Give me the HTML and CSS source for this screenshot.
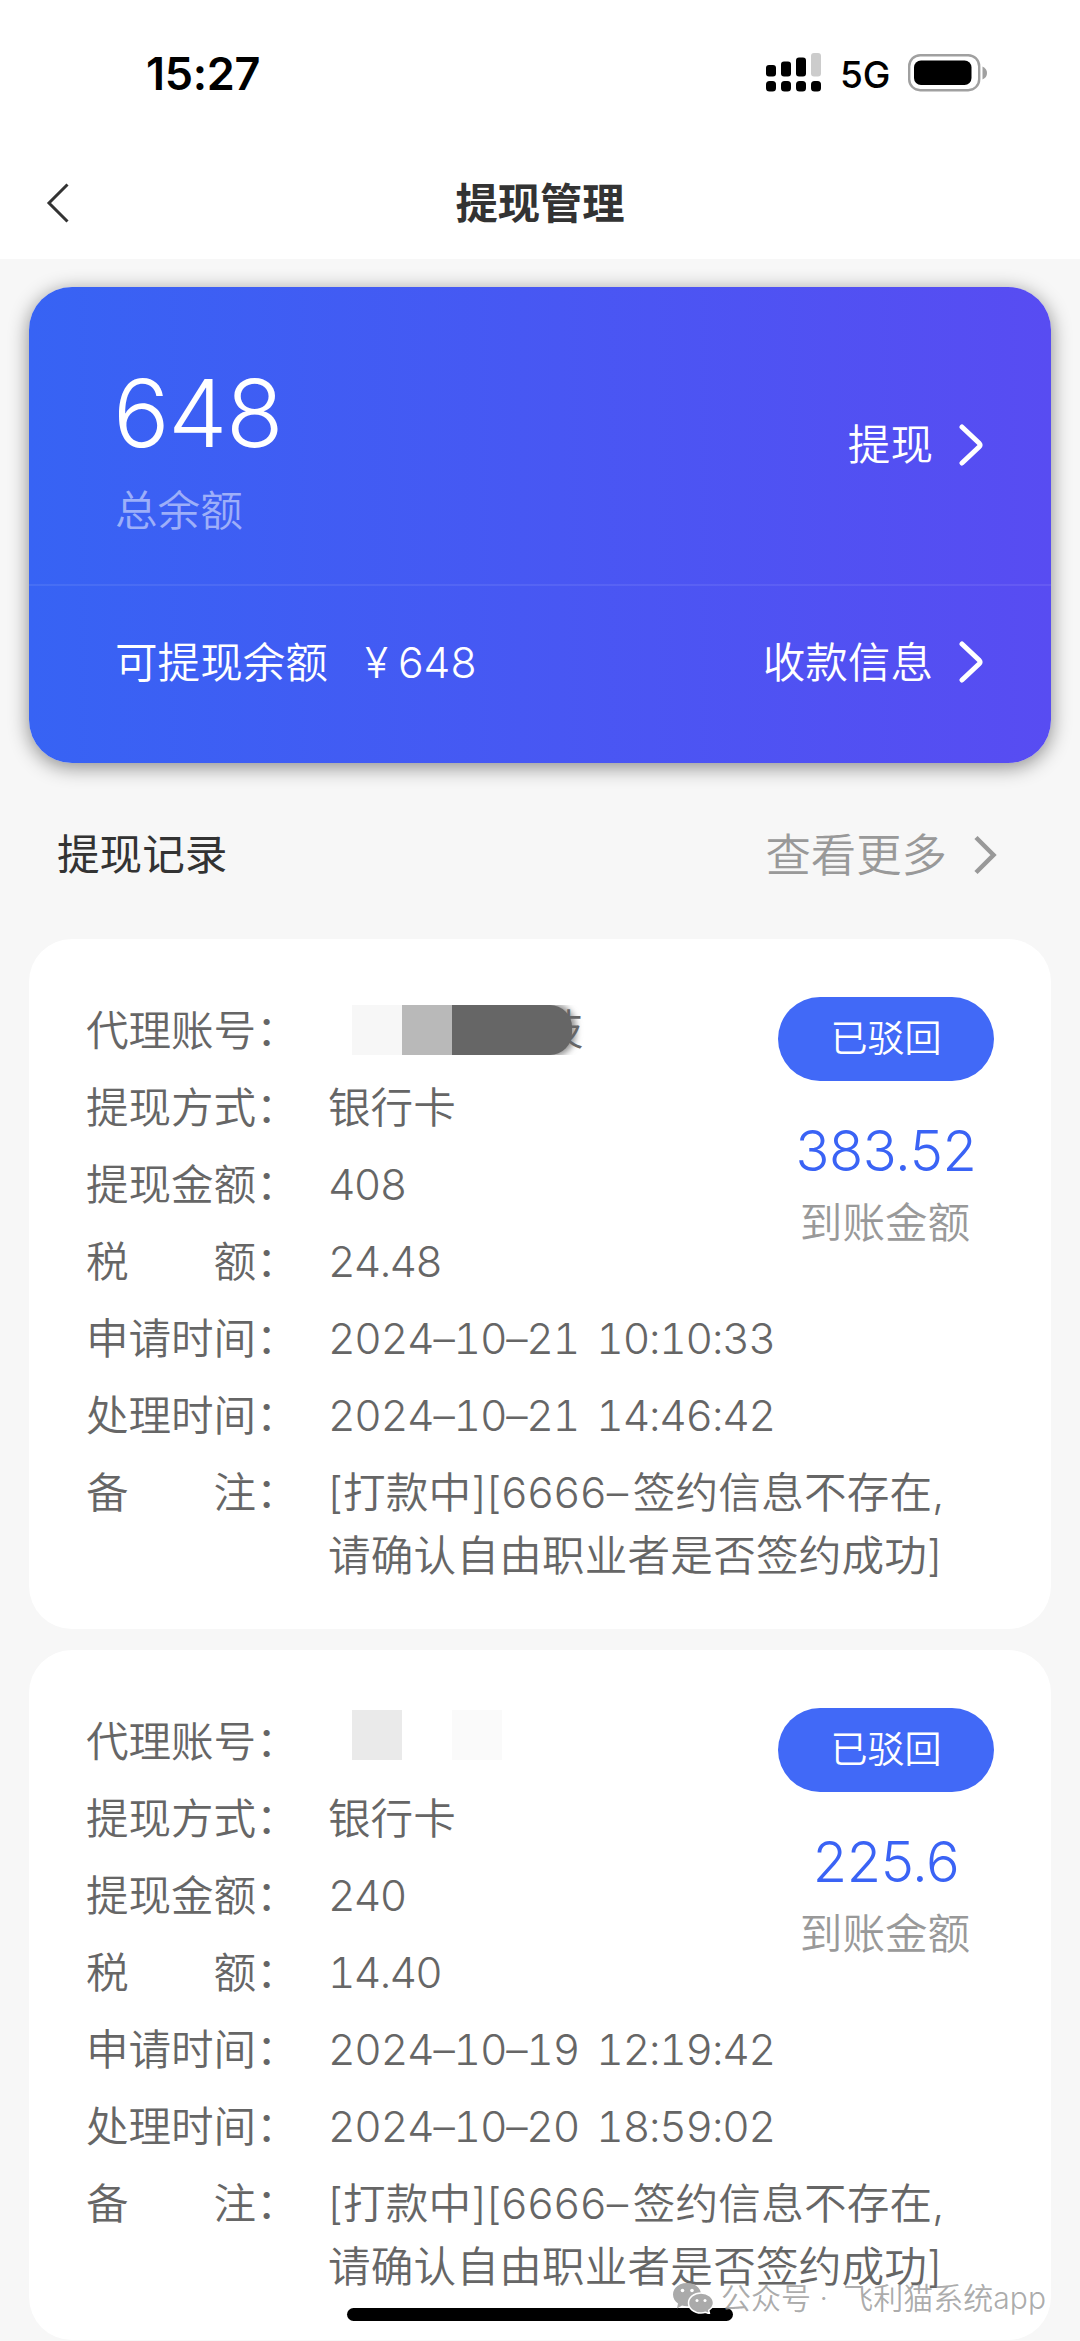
FILE: index.html
```html
<!DOCTYPE html>
<html lang="zh-CN">

<head>
    <meta charset="UTF-8">
    <meta name="viewport" content="width=device-width, initial-scale=1.0">
    <title>提现管理</title>

    <link rel="stylesheet" href="styles.css">
</head>

<body>

    <header class="header">
        <div class="status">
            <span class="time">15:27</span>
            <div class="status-right">
                <svg class="signal" width="56" height="39" viewBox="0 0 56 39">
                    <rect x="0" y="12" width="10" height="11.5" rx="3" />
                    <rect x="15" y="8.5" width="10" height="15" rx="3" />
                    <rect x="30" y="4.5" width="10" height="19" rx="3" />
                    <rect x="45" y="0" width="10" height="23.5" rx="3" fill="#ccc" />
                    <rect x="0" y="28" width="10" height="10.5" rx="3.5" />
                    <rect x="15" y="28" width="10" height="10.5" rx="3.5" />
                    <rect x="30" y="28" width="10" height="10.5" rx="3.5" />
                    <rect x="45" y="28" width="10" height="10.5" rx="3.5" />
                </svg>
                <span class="net">5G</span>
                <svg class="battery" width="80" height="38" viewBox="0 0 80 38">
                    <rect x="1.2" y="1.2" width="70" height="35" rx="11" fill="none" stroke="#a0a0a0" stroke-width="2.4" />
                    <rect x="6" y="6.5" width="57.5" height="24.5" rx="7" />
                    <path d="M74.5 12.5q4.500 2 4.500 6.500t-4.500 6.500z" fill="#a0a0a0" />
                </svg>
            </div>
        </div>
        <nav class="nav">
            <svg class="back" width="24" height="40" viewBox="0 0 24 40">
                <path d="M21.5 1.5L3 20l18.500 18.500" />
            </svg>
            <h1>提现管理</h1>
        </nav>
    </header>

    <main>
        <section class="balance">
            <div class="balance-top">
                <div>
                    <p class="total">648</p>
                    <p class="total-label">总余额</p>
                </div>
                <a class="link">提现
                    <svg class="arrow" width="26" height="42" viewBox="0 0 26 42">
                        <path d="M3 3l17 16q2 2 0 4L3 39" />
                    </svg>
                </a>
            </div>
            <div class="balance-bottom">
                <p>可提现余额<span class="money"><span class="yen">¥</span>648</span></p>
                <a class="link">收款信息
                    <svg class="arrow" width="26" height="42" viewBox="0 0 26 42">
                        <path d="M3 3l17 16q2 2 0 4L3 39" />
                    </svg>
                </a>
            </div>
        </section>

        <div class="title">
            <h2>提现记录</h2>
            <a class="more">查看更多
                <svg class="arrow" width="24" height="40" viewBox="0 0 24 40">
                    <path d="M3 2.5L20.5 20 3 37.5" />
                </svg>
            </a>
        </div>

        <section class="card">
            <dl class="info">
                <dt>代理账号：</dt>
                <dd><span class="mask mask-dark"><i></i><i></i><i></i><b>技</b></span></dd>
                <dt>提现方式：</dt>
                <dd>银行卡</dd>
                <dt>提现金额：</dt>
                <dd class="num">408</dd>
                <dt>税　　额：</dt>
                <dd class="num">24.48</dd>
                <dt>申请时间：</dt>
                <dd class="num date">2024–10–21 10:10:33</dd>
                <dt>处理时间：</dt>
                <dd class="num date">2024–10–21 14:46:42</dd>
                <dt>备　　注：</dt>
                <dd class="remark">[打款中][<span class="code">6666–</span>签约信息不存在,<br>请确认自由职业者是否签约成功]</dd>
            </dl>
            <div class="result">
                <span class="tag">已驳回</span>
                <p class="amount">383.52</p>
                <p class="amount-label">到账金额</p>
            </div>
        </section>

        <section class="card">
            <dl class="info">
                <dt>代理账号：</dt>
                <dd><span class="mask mask-light"><i></i><i></i><i></i></span></dd>
                <dt>提现方式：</dt>
                <dd>银行卡</dd>
                <dt>提现金额：</dt>
                <dd class="num">240</dd>
                <dt>税　　额：</dt>
                <dd class="num">14.40</dd>
                <dt>申请时间：</dt>
                <dd class="num date">2024–10–19 12:19:42</dd>
                <dt>处理时间：</dt>
                <dd class="num date">2024–10–20 18:59:02</dd>
                <dt>备　　注：</dt>
                <dd class="remark">[打款中][<span class="code">6666–</span>签约信息不存在,<br>请确认自由职业者是否签约成功]</dd>
            </dl>
            <div class="result">
                <span class="tag">已驳回</span>
                <p class="amount">225.6</p>
                <p class="amount-label">到账金额</p>
            </div>
        </section>
    </main>

    <div class="home-bar"></div>

    <div class="watermark">
        <svg width="42" height="32" viewBox="0 0 42 32">
            <path d="M15 1C7 1 1 6 1 12.5c0 4 2 7 5 9l-1 5 5-3q2.500 .8 5 .8C23 24.3 29 19 29 12.5S23 1 15 1z" />
            <path class="front" d="M29 11c-7 0-12.500 4.500-12.500 10S22 31 29 31q2.500 0 4.500-.7l4 1.500-.8-3.500c3-2 4.800-4.500 4.800-7.300C41.500 15.500 36 11 29 11z" />
            <g fill="#fff">
                <circle cx="10.5" cy="8.5" r="1.8" />
                <circle cx="20" cy="8.5" r="1.8" />
                <circle cx="25" cy="18.5" r="1.5" />
                <circle cx="33" cy="18.5" r="1.5" />
            </g>
        </svg>
        <span>公众号 · </span><span class="name">飞利猫系统app</span>
    </div>

</body>

</html>
```
FILE: styles.css
```css
* {
    box-sizing: border-box;
    margin: 0;
    padding: 0;
}

body {
    position: relative;
    height: 2341px;
    overflow: hidden;
    background: #f7f7f7;
    font-family: Inter, 'Noto Sans CJK SC', sans-serif;
    font-size: 42.6px;
    font-weight: 350;
    line-height: 63px;
    color: #666;
}

/* top bar */
.header {
    height: 259px;
    background: #fff;
}

.status {
    display: flex;
    justify-content: space-between;
    height: 147px;
    padding: 0 92px 0 146px;
    color: #000;
}

.time {
    margin-top: 42px;
    font-size: 45px;
    font-weight: 600;
    letter-spacing: -0.3px;
}

.status-right {
    display: flex;
    align-items: flex-start;
}

.signal {
    margin-top: 53px;
}

.net {
    width: 86px;
    margin-top: 43px;
    padding-left: 18px;
    font-size: 37px;
    font-weight: 450;
}

.battery {
    margin-top: 54px;
}

.nav {
    display: flex;
    align-items: center;
    height: 112px;
    padding: 0 46px;
}

.back {
    fill: none;
    stroke: #333;
    stroke-width: 3;
}

h1 {
    flex: 1;
    margin-right: 24px;
    text-align: center;
    font-size: 42.3px;
    font-weight: 700;
    color: #333;
}

main {
    padding: 28px 29px 0;
}

/* balance card */
.balance {
    height: 476px;
    border-radius: 43px;
    background: linear-gradient(to right, #3763f4, #584cf2);
    box-shadow: 0 4px 20px rgba(0, 0, 0, 0.45);
    color: #fff;
}

.balance-top,
.balance-bottom {
    display: flex;
    justify-content: space-between;
    padding: 0 66px 0 86px;
}

.balance-top {
    height: 299px;
    padding-top: 78px;
    border-bottom: 2px solid rgba(255, 255, 255, 0.08);
}

.balance-bottom {
    align-items: center;
    height: 152px;
}

.total {
    margin-left: -2px;
    font-size: 94px;
    line-height: 96px;
    letter-spacing: -1.3px;
}

.total-label {
    margin-top: 18px;
    color: rgba(255, 255, 255, 0.5);
}

.link,
.more {
    display: flex;
    align-items: center;
    gap: 26px;
}

.balance-top .link {
    height: 63px;
    margin-top: 48px;
}

.arrow {
    fill: none;
    stroke: currentColor;
    stroke-width: 5;
    stroke-linecap: round;
}

.money {
    margin-left: 37px;
}

.yen {
    margin-right: 10px;
}

/* list title */
.title {
    display: flex;
    align-items: center;
    justify-content: space-between;
    height: 176px;
    padding: 6px 54px 0 28px;
}

h2 {
    font-size: 42.6px;
    font-weight: 400;
    color: #333;
}

.more {
    padding-top: 2px;
    font-size: 45.4px;
    color: #999;
}

.more .arrow {
    stroke-width: 4.5;
    stroke-linecap: butt;
}

/* records */
.card {
    display: flex;
    justify-content: space-between;
    height: 690px;
    margin-bottom: 21px;
    padding: 58px 57px;
    border-radius: 43px;
    background: #fff;
}

.info {
    display: grid;
    grid-template-columns: 242px auto;
    row-gap: 14px;
    align-content: start;
    width: 680px;
    padding-top: 2px;
    white-space: nowrap;
}

.info dt {
    letter-spacing: -0.1px;
}

/* digits all take the same width */
.num {
    font-variant-numeric: tabular-nums;
    letter-spacing: -1.7px;
}

.date {
    letter-spacing: -1.2px;
    word-spacing: 7px;
}

.remark {
    letter-spacing: 0.2px;
}

.code {
    margin-right: 4px;
    letter-spacing: 0.7px;
}

.result {
    width: 216px;
    text-align: center;
}

.tag {
    display: block;
    height: 84px;
    border-radius: 42px;
    background: #4169f7;
    font-size: 37px;
    line-height: 83px;
    color: #fff;
}

.amount {
    margin-top: 35px;
    font-size: 56px;
    line-height: 70px;
    letter-spacing: -0.4px;
    color: #3a63f5;
}

.amount-label {
    margin-top: 5px;
    margin-left: -2px;
    color: #999;
}

/* hidden account name */
.mask {
    display: flex;
    width: 256px;
    height: 50px;
    margin-top: 6px;
    padding-left: 24px;
}

.mask i {
    width: 50px;
}

.mask-dark i:nth-child(1) {
    background: #f7f7f7;
}

.mask-dark i:nth-child(2) {
    background: #b9b9b9;
}

/* brush stroke with a soft end, the last character shows behind it */
.mask-dark i:nth-child(3) {
    z-index: 1;
    width: 120px;
    border-radius: 0 22px 22px 0;
    background: #666;
    box-shadow: 2px 0 6px 2px rgba(102, 102, 102, 0.7);
    clip-path: inset(0 -12px 0 0);
}

.mask-dark b {
    width: 40px;
    margin-left: -31px;
    font-weight: 350;
    line-height: 50px;
}

.mask-light {
    margin-top: 0;
}

.mask-light i:nth-child(1) {
    background: #eaeaea;
}

.mask-light i:nth-child(3) {
    background: #fafafa;
}

.home-bar {
    position: absolute;
    left: 347px;
    top: 2308px;
    width: 386px;
    height: 13px;
    border-radius: 7px;
    background: #000;
}

.watermark {
    position: absolute;
    left: 672px;
    top: 2277px;
    display: flex;
    align-items: center;
    font-size: 30px;
    line-height: 42px;
    white-space: pre;
    color: rgba(150, 150, 150, 0.8);
}

.watermark svg {
    margin-right: 7px;
    fill: #aaa;
}

.watermark .front {
    stroke: #fff;
    stroke-width: 1.5;
}

.watermark .name {
    margin-left: 7px;
}
```
